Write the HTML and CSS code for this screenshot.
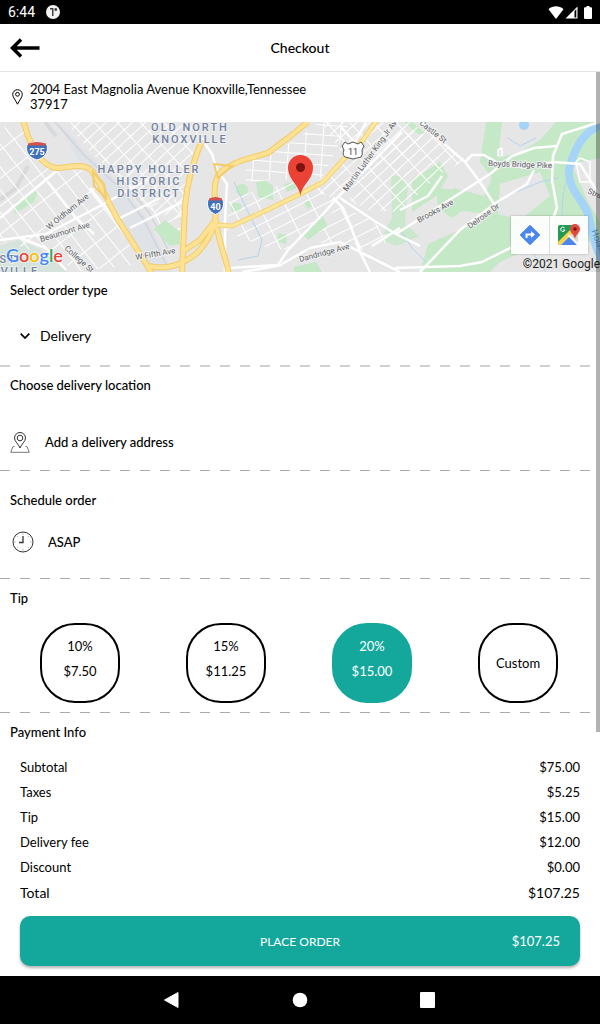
FILE: index.html
```html
<!DOCTYPE html>
<html lang="en">
<head>
    <meta charset="UTF-8">
    <meta name="viewport" content="width=device-width, initial-scale=1.0">
    <title>Checkout</title>
    <link rel="stylesheet" href="styles.css">
</head>
<body>
    <div class="status-bar">
        <span class="status-time">6:44</span>
        <svg class="status-app" width="14" height="14" viewBox="0 0 14 14">
            <circle cx="7" cy="7" r="7" fill="#f2f2f2"/>
            <path d="M4 3h3.500v8H6V4.500H4z" fill="#444"/>
            <rect x="8.500" y="3" width="2.500" height="3" rx="1" fill="#444"/>
        </svg>
        <div class="status-icons">
            <svg width="16" height="13" viewBox="0 0 16 13"><path d="M8 13L0.500 3.200C5 -0.600 11 -0.600 15.500 3.200Z" fill="#fff"/></svg>
            <svg width="13" height="13" viewBox="0 0 13 13"><path d="M12.500 0.500V12.500H0.500Z" fill="#fff"/><path d="M9.500 5l1.800-1.800v8.300H9.500z" fill="#000"/></svg>
            <svg class="battery" width="8" height="13" viewBox="0 0 8 13"><path d="M2.500 0h3v1.300H7a1 1 0 0 1 1 1V12a1 1 0 0 1-1 1H1a1 1 0 0 1-1-1V2.300a1 1 0 0 1 1-1h1.500z" fill="#fff"/></svg>
        </div>
    </div>

    <header class="header">
        <button class="back-btn" type="button" aria-label="Back">
            <svg width="30" height="20" viewBox="0 0 30 20"><path d="M29.500 10H3M11 1.500L2.500 10l8.500 8.500" fill="none" stroke="#000" stroke-width="3.500"/></svg>
        </button>
        <h1>Checkout</h1>
    </header>

    <main class="content">
        <div class="address">
            <svg width="11" height="16" viewBox="0 0 11 16" fill="none" stroke="#000">
                <path d="M5.500 15.200C4 11.800 0.700 8.400 0.700 5.500a4.800 4.800 0 0 1 9.600 0c0 2.900-3.300 6.300-4.800 9.700z"/>
                <circle cx="5.500" cy="5.300" r="1.900"/>
            </svg>
            <p>2004 East Magnolia Avenue Knoxville,Tennessee 37917</p>
        </div>

        <div class="map">
            <svg class="map-canvas" viewBox="0 0 600 150" preserveAspectRatio="xMidYMid slice">
                <defs>
                    <pattern id="gridNE" width="17" height="9" patternUnits="userSpaceOnUse" patternTransform="rotate(-43)"><path d="M0 0H17M0 0V9" class="street"/></pattern>
                    <pattern id="gridSlope" width="24" height="11" patternUnits="userSpaceOnUse" patternTransform="rotate(-27)"><path d="M0 0H24M0 0V11" class="street"/></pattern>
                    <pattern id="gridLeft" width="14" height="22" patternUnits="userSpaceOnUse" patternTransform="rotate(-38)"><path d="M0 0H14M0 0V22" class="street"/></pattern>
                    <pattern id="gridFlat" width="17" height="10" patternUnits="userSpaceOnUse" patternTransform="rotate(4)"><path d="M0 0H17M0 0V10" class="street"/></pattern>
                </defs>
                <rect width="600" height="150" fill="#e6e6e6"/>

                <!-- rail corridor -->
                <path d="M58 0L88 32L120 62L148 98L172 150L152 150L124 100L100 58L78 38z" fill="#dfe2e6"/>
                <path d="M55 0L84 33L120 66L144 98L168 146M122 58L150 92L170 132" fill="none" stroke="#d0d5dc" stroke-width="1.500"/>
                <path d="M45 0L56 14M28 44L16 66L0 78" fill="none" stroke="#d8d9da" stroke-width="4"/>

                <!-- parks -->
                <g fill="#c5e8c6">
                    <path d="M15 80L38 68L34 80L14 92z"/>
                    <path d="M256 60l10 -1 7 5v14l-15 -3z"/>
                    <circle cx="242" cy="68" r="6"/>
                    <rect x="231" y="81" width="10" height="9" rx="3"/>
                    <path d="M278 111l9 2 -1 9 -8 -2z"/>
                    <path d="M304 80l6 -2 2 7 -5 2z"/>
                    <path d="M284 62l9 -2 4 6 -10 4z"/>
                    <path d="M294 145l22 -5 6 10h-28z"/>
                    <path d="M391 54l9 0 8 8 -3 40 14 12 -22 10 -17 -6 12 -22z" opacity="0.800"/>
                    <path d="M412 58L440 40L448 54L436 74L412 90z"/>
                    <path d="M486 0H600V150H420L428 122L460 108L486 92L456 88L454 66L484 74L492 56L480 40z"/>
                    <path d="M412 0L426 12L418 12L404 0z"/>
                    <path d="M436 66l24 2 6 18 -14 10 -14 -10z"/>
                </g>
                <path d="M0 124L18 118L38 126L66 148V150H0z" fill="#d5e3dc"/>
                <g fill="#e6e6e6">
                    <path d="M502 0H556L540 18L520 30L498 36z"/>
                    <path d="M500 62L540 50L550 74L520 98L498 92z"/>
                    <path d="M500 140L540 122L600 118V150H490z"/>
                    <path d="M572 42L600 36V100L588 80z"/>
                </g>

                <!-- residential blocks -->
                <path d="M66 0H200L188 52L182 100L150 88L118 54L92 32z" fill="url(#gridNE)"/>
                <path d="M0 4L24 8L36 34L54 48L88 48L112 92L140 142L76 150L60 138L0 118z" fill="url(#gridLeft)"/>
                <path d="M150 82L182 76V120L168 124z" fill="url(#gridSlope)"/>
                <path d="M246 40L292 20L320 0L350 0L322 56L278 58L246 60z" fill="url(#gridFlat)"/>
                <path d="M322 0H414L426 20L336 76L304 68L346 38z" fill="url(#gridNE)"/>
                <path d="M230 76L300 58L338 78L318 96L290 128L268 126L226 110z" fill="url(#gridSlope)"/>
                <path d="M400 10L430 8L466 38L440 52L400 90L368 88L348 78z" fill="url(#gridNE)"/>
                <path d="M338 84L372 98L392 118L362 128L306 118z" fill="url(#gridSlope)"/>
                <path d="M154 107L165 98L180 110V122L170 124z" fill="#c5e8c6"/>
                <path d="M303 113L323 94L327 104L308 118z" fill="#c5e8c6"/>

                <!-- water -->
                <path d="M604 2C584 8 574 26 569 48C568 68 582 76 588 92C592 108 594 126 606 146" fill="none" stroke="#a5d4f8" stroke-width="8"/>
                <circle cx="524" cy="3" r="5" fill="#a5d4f8"/>
                <path d="M566 60C560 80 564 96 560 110M508 16L520 24L536 16M516 70L540 60L558 56M400 108L412 126L426 140M234 60L248 90L262 118L258 134L238 138M520 112L546 150" fill="none" stroke="#b4d4ef" stroke-width="1"/>

                <!-- local roads -->
                <g fill="none" stroke="#fff" stroke-width="2.500" stroke-linejoin="round">
                    <path d="M200 14L212 32L217 48L227 62L225 98V150"/>
                    <path d="M230 146L278 143L288 128L323 92L337 76L402 10"/>
                    <path d="M333 76L343 86L350 102L360 130L370 150"/>
                    <path d="M340 76L373 98L396 112L443 82L490 52L512 34L534 26L556 24"/>
                    <path d="M418 -3L443 21L465 40L480 60L494 82"/>
                    <path d="M465 40L472 33L484 33L500 42L527 46L553 40L580 42L590 58L600 74"/>
                    <path d="M420 150L460 108L497 80L527 62L534 48"/>
                    <path d="M600 0L562 12L553 34L552 58L557 86L550 104"/>
                    <path d="M395 146L460 144L482 140L510 126L560 118"/>
                    <path d="M282 142L310 126L340 120L400 150M242 150L282 143"/>
                    <path d="M400 88L428 74L442 54M420 124L396 112M372 124L400 106"/>
                    <path d="M340 4L358 24M366 0L352 26"/>
                    <path d="M0 118L46 112L100 84L150 56M0 96L60 46M66 148L46 126L20 116"/>
                    <path d="M48 60L76 96L94 112M120 96L160 76M90 66L124 108M130 106L182 80"/>
                    <path d="M498 34V28l4 -2v8M576 40l4 -4 10 4v20h-10z" stroke-width="1.500"/>
                </g>

                <!-- highways -->
                <g class="highway-edge">
                    <path d="M23 -2L28 14C34 28 42 44 56 46C68 46 84 40 92 49C100 60 102 68 117 96L133 121L147 143L152 152"/>
                    <path d="M202 18C192 42 187 62 185 84L182 152"/>
                    <path d="M148 144C166 148 182 144 198 130C214 112 218 98 215 76C212 50 224 46 243 38L268 31L288 16L308 0"/>
                    <path d="M216 98C218 120 224 128 229 152"/>
                    <path d="M182 130L200 118L214 100"/>
                </g>
                <g class="highway">
                    <path d="M23 -2L28 14C34 28 42 44 56 46C68 46 84 40 92 49C100 60 102 68 117 96L133 121L147 143L152 152"/>
                    <path d="M202 18C192 42 187 62 185 84L182 152"/>
                    <path d="M148 144C166 148 182 144 198 130C214 112 218 98 215 76C212 50 224 46 243 38L268 31L288 16L308 0"/>
                    <path d="M216 98C218 120 224 128 229 152"/>
                    <path d="M182 130L200 118L214 100"/>
                    <path class="ramp" d="M93 50L94 64L106 76L104 62z"/>
                    <path class="ramp" d="M214 42L232 44L218 56z"/>
                </g>
                <path d="M217 103L232 104L267 88L300 72L323 60L343 38L363 18L377 -2" fill="none" stroke="#f6d172" stroke-width="5"/>
                <path d="M217 103L232 104L267 88L300 72L323 60L343 38L363 18L377 -2" fill="none" stroke="#fde79a" stroke-width="3"/>

                <!-- labels -->
                <g class="area-label" text-anchor="middle">
                    <text x="190" y="9">OLD NORTH</text>
                    <text x="190" y="21">KNOXVILLE</text>
                    <text x="149" y="51">HAPPY HOLLER</text>
                    <text x="149" y="63">HISTORIC</text>
                    <text x="149" y="75">DISTRICT</text>
                    <text x="4" y="141">EST</text>
                    <text x="20" y="153">VILLE</text>
                </g>
                <g class="road-label">
                    <text transform="translate(49 108) rotate(-39)">W Oldham Ave</text>
                    <text transform="translate(41 120) rotate(-17)">Beaumont Ave</text>
                    <text transform="translate(64 127) rotate(42)">College St</text>
                    <text transform="translate(136 138) rotate(-10)">W Fifth Ave</text>
                    <text transform="translate(300 140) rotate(-15)">Dandridge Ave</text>
                    <text transform="translate(347 70) rotate(-54)">Martin Luther King Jr Ave</text>
                    <text transform="translate(419 2) rotate(38)">Castle St</text>
                    <text transform="translate(488 44) rotate(2)">Boyds Bridge Pike</text>
                    <text transform="translate(419 101) rotate(-29)">Brooks Ave</text>
                    <text transform="translate(470 107) rotate(-36)">Delrose Dr</text>
                    <text transform="translate(587 71) rotate(24)">Strawberry</text>
                    <text class="water-label" transform="translate(591 109) rotate(68)">Holston River</text>
                </g>

                <!-- route shields -->
                <g class="shield">
                    <path d="M27 22.500Q37 18.500 47 22.500C49 31 44 36 37 38C30 36 25 31 27 22.500z" fill="#3f72ba" stroke="#fff"/>
                    <path d="M28 21.500q9 -3 18 0v2H28z" fill="#d5504b"/>
                    <text x="37" y="33">275</text>
                    <path d="M208 77.500Q215.500 74 223 77.500C225 86 221 90 215.500 92.500C210 90 206 86 208 77.500z" fill="#3f72ba" stroke="#fff"/>
                    <path d="M209 76.500q6.500 -3 13 0v2h-13z" fill="#d5504b"/>
                    <text x="215.500" y="88">40</text>
                    <path d="M345 20l3 2 5 -2 5 2 3 -2 3 4 -2 4q1 5 -1 7l-8 2 -8 -2q-3 -2 -1 -7l-2 -4z" fill="#fff" stroke="#555"/>
                    <text class="us-route" x="353" y="33">11</text>
                </g>

                <!-- marker -->
                <path d="M300.500 74C299 62 288 58 288 45.500a12.500 12.500 0 0 1 25 0C313 58 302 62 300.500 74z" fill="#ea4335"/>
                <circle cx="300.500" cy="45.500" r="4.500" fill="#7b130f"/>
            </svg>
            <div class="google-logo"><span class="g-blue">G</span><span class="g-red">o</span><span class="g-yellow">o</span><span class="g-blue">g</span><span class="g-green">l</span><span class="g-red">e</span></div>
            <div class="map-tools">
                <button type="button" aria-label="Directions">
                    <svg width="22" height="22" viewBox="0 0 22 22"><path d="M11 1.200L20.800 11 11 20.800 1.200 11z" fill="#4a86ed" stroke="#4a86ed" stroke-linejoin="round"/><path d="M7.500 14V10.500H13" fill="none" stroke="#fff" stroke-width="2"/><path d="M12 7l4 3.500-4 3.500z" fill="#fff"/></svg>
                </button>
                <button type="button" aria-label="Open map">
                    <svg width="22" height="22" viewBox="0 0 22 22">
                        <path d="M0 3a2 2 0 0 1 2-2h14v5l-15 15-1-1z" fill="#239b56"/>
                        <path d="M0 18L12 6l3 3L3 21H1l-1-1z" fill="#fbd34b"/>
                        <path d="M11 10L20 19v2h-1.500L9.500 12z" fill="#fff"/>
                        <path d="M3 21l8-8 8 8z" fill="#4a86ed"/>
                        <path d="M12 11l8-1v9z" fill="#d9d9d9"/>
                        <path d="M17 15C16 10 12 9 12 5a5 5 0 0 1 10 0c0 4-4 5-5 10z" fill="#e04a3f"/>
                        <circle cx="17" cy="5" r="1.800" fill="#7b130f"/>
                        <path d="M6.500 3.800A2.200 2.200 0 1 0 7 6H5" fill="none" stroke="#fff"/>
                    </svg>
                </button>
            </div>
            <div class="copyright">©2021 Google</div>
        </div>

        <section class="section order-type">
            <h2><label for="orderType">Select order type</label></h2>
            <div class="select-row">
                <svg width="10" height="6" viewBox="0 0 10 6"><path d="M0.700 0.700L5 5l4.300-4.300" fill="none" stroke="#000" stroke-width="1.700"/></svg>
                <select id="orderType">
                    <option>Delivery</option>
                    <option>Pickup</option>
                </select>
            </div>
        </section>

        <section class="section location">
            <h2>Choose delivery location</h2>
            <button class="row-btn" type="button">
                <svg width="20" height="21" viewBox="0 0 20 21" fill="none" stroke="#333">
                    <path d="M10 16C8.500 12 4.500 9.500 4.500 6a5.500 5.500 0 0 1 11 0c0 3.500-4 6-5.500 10z"/>
                    <circle cx="10" cy="6" r="2.800"/>
                    <path d="M4.500 14.500H3L0.700 20.300H19.300L17 14.500H15.500" stroke="#777"/>
                </svg>
                <span>Add a delivery address</span>
            </button>
        </section>

        <section class="section schedule">
            <h2>Schedule order</h2>
            <button class="row-btn" type="button">
                <svg width="22" height="22" viewBox="0 0 22 22" fill="none" stroke="#333">
                    <circle cx="11" cy="11" r="10"/>
                    <path d="M11 5v6.500H7" stroke-width="1.300"/>
                    <path d="M11 2.500v1M11 18.500v1M2.500 11h1M18.500 11h1M5 5l.6.6M16.400 5.600L17 5M5 17l.6-.6M16.400 16.400l.6.6" stroke="#888"/>
                </svg>
                <span>ASAP</span>
            </button>
        </section>

        <section class="section tip">
            <h2>Tip</h2>
            <div class="tip-options">
                <label class="tip-option"><input type="radio" name="tip"><span>10%</span><span>$7.50</span></label>
                <label class="tip-option"><input type="radio" name="tip"><span>15%</span><span>$11.25</span></label>
                <label class="tip-option"><input type="radio" name="tip" checked><span>20%</span><span>$15.00</span></label>
                <label class="tip-option custom"><input type="radio" name="tip"><span>Custom</span></label>
            </div>
        </section>

        <section class="payment">
            <h2>Payment Info</h2>
            <table class="totals">
                <tr><th scope="row">Subtotal</th><td>$75.00</td></tr>
                <tr><th scope="row">Taxes</th><td>$5.25</td></tr>
                <tr><th scope="row">Tip</th><td>$15.00</td></tr>
                <tr><th scope="row">Delivery fee</th><td>$12.00</td></tr>
                <tr><th scope="row">Discount</th><td>$0.00</td></tr>
                <tr class="total"><th scope="row">Total</th><td>$107.25</td></tr>
            </table>
            <button class="place-btn" type="button">
                <span class="place-label">PLACE ORDER</span>
                <span class="place-price">$107.25</span>
            </button>
        </section>
        <div class="scroll-thumb"></div>
    </main>

    <nav class="nav-bar">
        <button type="button" aria-label="Back"><svg width="16" height="16" viewBox="0 0 16 16"><path d="M14 0.500v15L0.500 8z" fill="#fff" stroke="#fff" stroke-linejoin="round"/></svg></button>
        <button type="button" aria-label="Home"><svg width="16" height="16" viewBox="0 0 16 16"><circle cx="8" cy="8" r="7.300" fill="#fff"/></svg></button>
        <button type="button" aria-label="Recent apps"><svg width="16" height="16" viewBox="0 0 16 16"><rect width="15" height="16" rx="1" fill="#fff"/></svg></button>
    </nav>
</body>
</html>
```
FILE: styles.css
```css
* {
    margin: 0;
    padding: 0;
    box-sizing: border-box;
}

body {
    font-family: Lato, "Liberation Sans", sans-serif;
    font-size: 13px;
    color: #000;
    background: #fff;
    min-height: 100vh;
    display: flex;
    flex-direction: column;
}

button, select {
    font: inherit;
    color: inherit;
    background: none;
    border: none;
    cursor: pointer;
}

svg {
    display: block;
    flex-shrink: 0;
}

.status-bar {
    display: flex;
    align-items: center;
    height: 24px;
    padding: 0 8px;
    background: #000;
    color: #fff;
}

.status-time {
    font-family: Roboto, sans-serif;
    font-size: 14px;
}

.status-app {
    margin-left: 11px;
}

.status-icons {
    display: flex;
    gap: 1px;
    margin-left: auto;
}

.battery {
    margin-left: 5px;
}

.header {
    display: grid;
    grid-template-columns: 1fr auto 1fr;
    align-items: center;
    height: 48px;
    padding: 0 10px;
    border-bottom: 1px solid #e4e4e4;
}

.header h1 {
    font-size: 14px;
    font-weight: 500;
}

.back-btn {
    justify-self: start;
}

.content {
    position: relative;
    flex: 1;
}

.address {
    display: flex;
    align-items: center;
    gap: 7px;
    min-height: 50px;
    padding: 0 12px;
    line-height: 15px;
}

.address p {
    max-width: 290px;
}

.map {
    position: relative;
    height: 150px;
    overflow: hidden;
}

.map-canvas {
    width: 100%;
    height: 100%;
}

.street {
    fill: none;
    stroke: #fff;
    stroke-width: 2px;
}

.highway-edge path {
    fill: none;
    stroke: #f3cb68;
    stroke-width: 6px;
}

.highway path {
    fill: none;
    stroke: #fde293;
    stroke-width: 4px;
}

.highway .ramp {
    stroke: #f3cb68;
    stroke-width: 2px;
}

.area-label {
    font: 500 11px Roboto, sans-serif;
    letter-spacing: 2px;
    fill: #74829e;
    stroke: #eef0f2;
    stroke-width: 2px;
    paint-order: stroke;
}

.road-label {
    font: 8px Roboto, sans-serif;
    fill: #5c6166;
    stroke: #f2f2f2;
    stroke-width: 2px;
    paint-order: stroke;
}

.road-label .water-label {
    font-size: 9px;
    fill: #4a8fc9;
    stroke: none;
}

.shield text {
    font: bold 9px Roboto, sans-serif;
    fill: #fff;
    text-anchor: middle;
}

.shield .us-route {
    fill: #444;
    font-weight: normal;
}

.google-logo {
    position: absolute;
    left: 6px;
    bottom: 6px;
    font: 600 18px/22px Lato, sans-serif;
    text-shadow: 0 0 2px #fff, 0 0 2px #fff;
}

.g-blue { color: #4285f4; }
.g-red { color: #ea4335; }
.g-yellow { color: #fbbc05; }
.g-green { color: #34a853; }

.map-tools {
    position: absolute;
    right: 12px;
    bottom: 18px;
    display: flex;
    background: rgba(255, 255, 255, 0.9);
    box-shadow: 0 0 2px rgba(0, 0, 0, 0.3);
}

.map-tools button {
    width: 38px;
    height: 38px;
    display: flex;
    align-items: center;
    justify-content: center;
}

.map-tools button + button {
    width: 39px;
    border-left: 1px solid #ddd;
}

.copyright {
    position: absolute;
    right: 0;
    bottom: 0;
    font: 12px/16px Roboto, sans-serif;
    color: #222;
}

h2 {
    font-size: 13px;
    font-weight: 500;
    line-height: 16px;
    padding-left: 10px;
}

/* dashed line under each section */
.section::after {
    content: '';
    display: block;
    height: 1px;
    background: repeating-linear-gradient(90deg, #aaa 0 10px, transparent 10px 20px);
}

.order-type {
    padding-top: 10px;
}

.order-type::after {
    height: 2px;
    background: repeating-linear-gradient(90deg, #d0d0d0 0 10px, transparent 10px 20px);
}

.select-row {
    display: flex;
    align-items: center;
    gap: 10px;
    padding: 28px 20px 19px;
}

.select-row select {
    appearance: none;
    font-size: 14px;
    line-height: 20px;
}

.row-btn {
    display: flex;
    align-items: center;
    gap: 15px;
    height: 24px;
    padding: 0 10px;
    font-weight: 500;
}

.location {
    padding-top: 10px;
}

.location .row-btn {
    margin: 37px 0 16px;
}

.schedule {
    padding-top: 21px;
}

.schedule .row-btn {
    margin: 22px 0 24px;
    padding: 0 12px;
    gap: 14px;
}

.tip {
    padding-top: 11px;
}

.tip-options {
    display: flex;
    justify-content: space-between;
    padding: 17px 42px 9px 40px;
}

.tip-option {
    display: flex;
    flex-direction: column;
    gap: 9px;
    width: 80px;
    height: 80px;
    padding-top: 13px;
    border: 2px solid #000;
    border-radius: 35px;
    text-align: center;
    line-height: 16px;
    cursor: pointer;
}

.tip-option.custom {
    justify-content: center;
    padding-top: 0;
}

.tip-option input {
    position: absolute;
    opacity: 0;
}

.tip-option:has(input:checked) {
    background: #14a89d;
    border-color: #14a89d;
    color: #fff;
}

.payment {
    padding: 11px 0 10px;
}

.totals {
    width: 100%;
    margin-top: 14px;
    border-collapse: collapse;
}

.totals th, .totals td {
    height: 25px;
    padding: 0 20px;
    font-weight: 400;
    text-align: left;
}

.totals td {
    text-align: right;
}

.totals .total th, .totals .total td {
    height: 27px;
    font-size: 14px;
}

.place-btn {
    display: grid;
    grid-template-columns: 1fr auto 1fr;
    align-items: center;
    width: calc(100% - 40px);
    height: 50px;
    margin: 10px 20px 0;
    padding: 0 20px;
    border-radius: 10px;
    background: #14a89d;
    color: #fff;
    box-shadow: 0 2px 3px rgba(0, 0, 0, 0.3);
}

.place-label {
    grid-column: 2;
    font-size: 12px;
}

.place-price {
    justify-self: end;
}

.scroll-thumb {
    position: absolute;
    top: 0;
    right: 0;
    width: 4px;
    height: 73%;
    background: rgba(0, 0, 0, 0.3);
}

.nav-bar {
    display: flex;
    justify-content: center;
    align-items: center;
    gap: 112px;
    height: 48px;
    background: #000;
}

.nav-bar button {
    width: 16px;
    height: 16px;
}
```
